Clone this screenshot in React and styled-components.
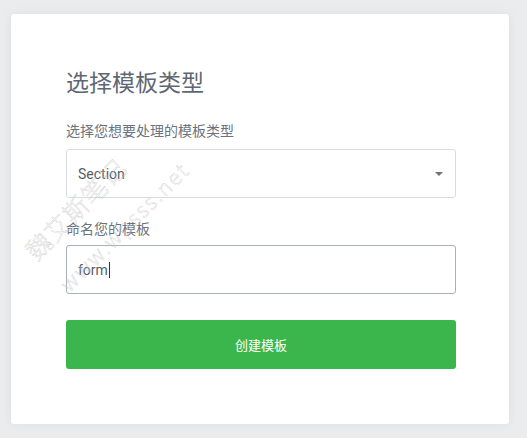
import React from 'react';
import styled, { createGlobalStyle } from 'styled-components';

const GlobalStyle = createGlobalStyle`
  html, body {
    margin: 0;
    padding: 0;
    background: #ebecee;
    font-family: Roboto, "Noto Sans CJK SC", sans-serif;
  }
`;

const Page = styled.div`
  width: 527px;
  height: 438px;
  padding: 14px 0 0 11px;
  box-sizing: border-box;
  background: #ebecee;
`;

const Card = styled.div`
  position: relative;
  width: 498px;
  height: 410px;
  box-sizing: border-box;
  padding: 54px 53px 0 55px;
  background: #fff;
  border-radius: 3px;
  box-shadow: 0 0 12px rgba(0, 0, 0, 0.06);
  overflow: hidden;
`;

const Title = styled.h2`
  margin: 0 0 22px;
  font-size: 23px;
  line-height: 32px;
  font-weight: 400;
  color: #5f6773;
`;

const Label = styled.label`
  display: block;
  margin-bottom: ${p => p.$gap || 9}px;
  font-size: 14px;
  line-height: 18px;
  color: #6c737d;
`;

const Field = styled.div`
  margin-bottom: ${p => p.$mb}px;
`;

const SelectBox = styled.div`
  display: flex;
  align-items: center;
  justify-content: space-between;
  height: 49px;
  box-sizing: border-box;
  padding: 0 12px 0 11px;
  border: 1px solid #d8dce0;
  border-radius: 3px;
  font-size: 14px;
  color: #555d68;
`;

const Caret = styled.span`
  width: 0;
  height: 0;
  border-left: 4px solid transparent;
  border-right: 4px solid transparent;
  border-top: 4px solid #6a717a;
`;

const Input = styled.div`
  display: flex;
  align-items: center;
  height: 49px;
  box-sizing: border-box;
  padding: 0 11px;
  border: 1px solid #a9b0b8;
  border-radius: 3px;
  font-size: 14px;
  color: #555d68;
`;

const Cursor = styled.span`
  display: inline-block;
  width: 1px;
  height: 16px;
  margin-left: 1px;
  background: #333;
`;

const Button = styled.button`
  display: block;
  width: 390px;
  height: 49px;
  border: none;
  border-radius: 3px;
  background: #3bb64c;
  color: #fff;
  font-family: inherit;
  font-size: 13px;
`;

const Watermark = styled.div`
  position: absolute;
  left: ${p => p.$x}px;
  top: ${p => p.$y}px;
  transform: rotate(-45deg);
  transform-origin: left center;
  white-space: nowrap;
  font-size: ${p => p.$size}px;
  font-weight: 300;
  letter-spacing: ${p => p.$ls}px;
  color: transparent;
  -webkit-text-stroke: 0.35px #c8c8c8;
  font-family: "Noto Sans CJK SC", "DejaVu Sans", sans-serif;
  pointer-events: none;
`;

export default function App() {
  return (
    <>
      <GlobalStyle />
      <Page>
        <Card>
          <Title>选择模板类型</Title>
          <Field $mb={22}>
            <Label $gap={9}>选择您想要处理的模板类型</Label>
            <SelectBox>
              <span>Section</span>
              <Caret />
            </SelectBox>
          </Field>
          <Field $mb={26}>
            <Label $gap={7}>命名您的模板</Label>
            <Input>
              form<Cursor />
            </Input>
          </Field>
          <Button>创建模板</Button>
          <Watermark $x={18} $y={222} $size={25} $ls={1}>魏艾斯笔记</Watermark>
          <Watermark $x={52} $y={258} $size={21} $ls={2}>www.wpsss.net</Watermark>
        </Card>
      </Page>
    </>
  );
}
